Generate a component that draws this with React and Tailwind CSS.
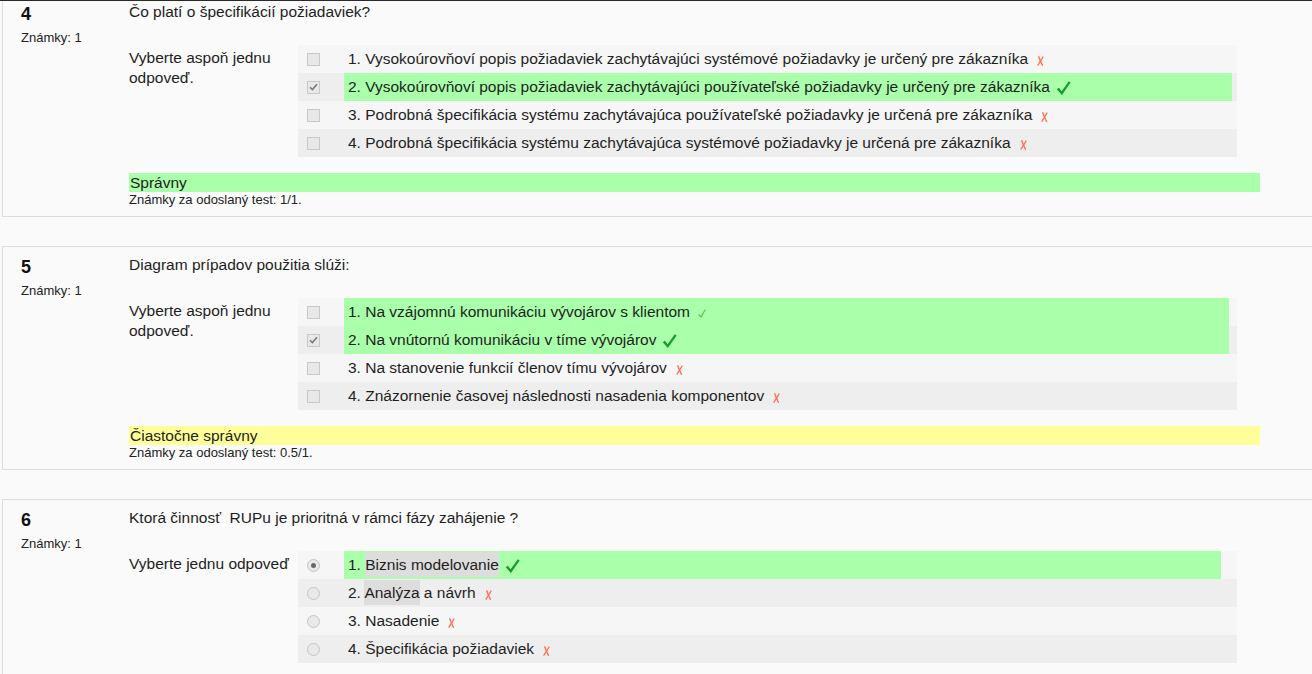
import React from "react";

const QUESTIONS = [
  {
    num: 4,
    text: "Čo platí o špecifikácií požiadaviek?",
    prompt: "Vyberte aspoň jednu odpoveď.",
    type: "checkbox",
    labelW: "w-[888px]",
    answers: [
      { t: "1. Vysokoúrovňoví popis požiadaviek zachytávajúci systémové požiadavky je určený pre zákazníka", mark: "x" },
      { t: "2. Vysokoúrovňoví popis požiadaviek zachytávajúci používateľské požiadavky je určený pre zákazníka", checked: true, correct: true, mark: "check" },
      { t: "3. Podrobná špecifikácia systému zachytávajúca používateľské požiadavky je určená pre zákazníka", mark: "x" },
      { t: "4. Podrobná špecifikácia systému zachytávajúca systémové požiadavky je určená pre zákazníka", mark: "x" },
    ],
    status: "Správny",
    statusBg: "bg-[#aaffaa]",
    grade: "1/1.",
  },
  {
    num: 5,
    text: "Diagram prípadov použitia slúži:",
    prompt: "Vyberte aspoň jednu odpoveď.",
    type: "checkbox",
    labelW: "w-[885px]",
    answers: [
      { t: "1. Na vzájomnú komunikáciu vývojárov s klientom", correct: true, mark: "small" },
      { t: "2. Na vnútornú komunikáciu v tíme vývojárov", checked: true, correct: true, mark: "check" },
      { t: "3. Na stanovenie funkcií členov tímu vývojárov", mark: "x" },
      { t: "4. Znázornenie časovej následnosti nasadenia komponentov", mark: "x" },
    ],
    status: "Čiastočne správny",
    statusBg: "bg-[#ffff99]",
    grade: "0.5/1.",
  },
  {
    num: 6,
    text: "Ktorá činnosť  RUPu je prioritná v rámci fázy zahájenie ?",
    prompt: "Vyberte jednu odpoveď",
    type: "radio",
    labelW: "w-[877px]",
    answers: [
      { pre: "1. ", hl: "Biznis modelovanie", post: "", checked: true, correct: true, mark: "check" },
      { pre: "2. ", hl: "Analýza", post: " a návrh", mark: "x" },
      { t: "3. Nasadenie", mark: "x" },
      { t: "4. Špecifikácia požiadaviek", mark: "x" },
    ],
  },
];

function XMark() {
  return (
    <svg width="7" height="10" viewBox="0 0 7 10" className="ml-[9px] mt-[3px] shrink-0">
      <path d="M1.8 0.8 C2.8 3.8 4 6.6 5.4 9.3" stroke="#ff6e4e" strokeWidth="1.4" fill="none" strokeLinecap="round" />
      <path d="M6 1 C4.6 3.8 2.8 6.4 1 9.1" stroke="#ff6e4e" strokeWidth="1.3" fill="none" strokeLinecap="round" />
    </svg>
  );
}

function CheckMark() {
  return (
    <svg width="15" height="16" viewBox="0 0 16 16" className="ml-[6px] mt-[2px] shrink-0">
      <path d="M0.8 9.4 L3.1 7.8 L6 11.4 L13.7 0.8 L15.6 2.1 L6.3 15.4 Z" fill="#169c2b" />
    </svg>
  );
}

function SmallCheck() {
  return (
    <svg width="8" height="9" viewBox="0 0 8 9" className="ml-[8px] mt-[3px] shrink-0">
      <path d="M0.8 5.4 L3 8 L7.2 0.8" stroke="#5fb85f" strokeWidth="1.1" fill="none" />
    </svg>
  );
}

function Box({ type, checked }) {
  if (type === "radio") {
    return (
      <span className="w-[13px] h-[13px] rounded-full border border-[#c4c4c4] bg-[#e9e9e9] flex items-center justify-center">
        {checked && <span className="w-[5px] h-[5px] rounded-full bg-[#6a6a6a]" />}
      </span>
    );
  }
  return (
    <span className="w-[13px] h-[13px] border border-[#c8c8c8] bg-[#e8e8e8] flex items-center justify-center">
      {checked && (
        <svg width="9" height="8" viewBox="0 0 9 8">
          <path d="M1 4.2 L3.4 6.6 L8 1.2" stroke="#7a7a7a" strokeWidth="1.6" fill="none" />
        </svg>
      )}
    </span>
  );
}

function Question({ q, first }) {
  return (
    <div
      className={`${first ? "mt-[-7px]" : ""} mb-[29px] ml-[2px] w-[1340px] border border-[#dcdcdc] bg-[#fafafa] flex`}
    >
      {/* info */}
      <div className="w-[126px] shrink-0 pl-[18px] pt-[8px]">
        <div className="text-[18px] leading-[24px] font-bold text-[#111]">{q.num}</div>
        <div className="mt-[4px] text-[13px] leading-[16px] text-[#222]">Známky: 1</div>
      </div>

      {/* content */}
      <div className={`pt-[8px] ${q.status ? "pb-[8px]" : "pb-[40px]"}`}>
        <div className="text-[15.5px] leading-[20px] text-[#1e1e1e] whitespace-pre">{q.text}</div>
        <div className="mt-[23px] flex">
          <div className="w-[169px] shrink-0 pt-[3px] pr-[8px] text-[15.5px] leading-[20px] text-[#1e1e1e]">
            {q.prompt}
          </div>
          <div className="w-[939px]">
            {q.answers.map((a, i) => (
              <div
                key={i}
                className={`h-[28px] flex items-center ${i % 2 === 0 ? "bg-[#f6f6f6]" : "bg-[#eeeeee]"}`}
              >
                <div className="w-[46px] shrink-0 pl-[9px] flex items-center">
                  <Box type={q.type} checked={a.checked} />
                </div>
                <div
                  className={`${q.labelW} h-[28px] pl-[4px] flex items-center text-[15.5px] text-[#1e1e1e] whitespace-nowrap ${
                    a.correct ? "bg-[#aaffaa]" : ""
                  }`}
                >
                  {a.hl ? (
                    <span className="whitespace-pre">
                      {a.pre}
                      <span className="bg-[#dddddd] py-[4px]">{a.hl}</span>
                      {a.post}
                    </span>
                  ) : (
                    <span>{a.t}</span>
                  )}
                  {a.mark === "x" && <XMark />}
                  {a.mark === "check" && <CheckMark />}
                  {a.mark === "small" && <SmallCheck />}
                </div>
              </div>
            ))}
          </div>
        </div>
        {q.status && (
          <>
            <div
              className={`mt-[16px] w-[1131px] h-[19px] ${q.statusBg} text-[15.5px] leading-[19px] pl-[1px] text-[#1e1e1e]`}
            >
              {q.status}
            </div>
            <div className="text-[13px] leading-[16px] text-[#222]">
              Známky za odoslaný test: {q.grade}
            </div>
          </>
        )}
      </div>
    </div>
  );
}

export default function App() {
  return (
    <div className="relative h-screen overflow-hidden bg-[#fafafa] font-['Liberation_Sans',Arial,sans-serif]">
      {QUESTIONS.map((q, i) => (
        <Question key={q.num} q={q} first={i === 0} />
      ))}
      <div className="absolute top-0 left-0 right-0 h-px bg-[#2a2a2a]" />
    </div>
  );
}
